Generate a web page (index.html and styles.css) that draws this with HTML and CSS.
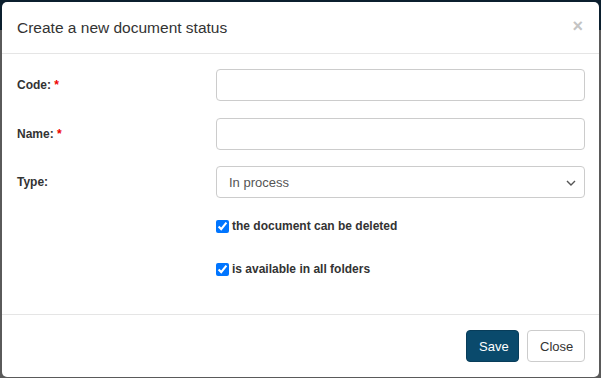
FILE: index.html
```html
<!DOCTYPE html>
<html>
<head>
<meta charset="utf-8">
<link rel="stylesheet" href="styles.css">
</head>
<body>
<div class="modal">
  <div class="modal-header">
    <h4 class="modal-title">Create a new document status</h4>
    <span class="close-x">&times;</span>
  </div>
  <div class="modal-body">
    <div class="form-row first">
      <label class="form-label">Code: <span class="req">*</span></label>
      <div class="input"></div>
    </div>
    <div class="form-row">
      <label class="form-label">Name: <span class="req">*</span></label>
      <div class="input"></div>
    </div>
    <div class="form-row">
      <label class="form-label">Type:</label>
      <div class="input select">
        <span>In process</span>
        <svg class="chev" width="10" height="6" viewBox="0 0 10 6"><path d="M1 1l4 4 4-4" fill="none" stroke="#555" stroke-width="1.4"/></svg>
      </div>
    </div>
    <div class="check-row">
      <label class="check"><input type="checkbox" checked> the document can be deleted</label>
    </div>
    <div class="check-row">
      <label class="check"><input type="checkbox" checked> is available in all folders</label>
    </div>
  </div>
  <div class="modal-footer">
    <button class="btn btn-primary">Save</button>
    <button class="btn btn-default">Close</button>
  </div>
</div>
</body>
</html>
```
FILE: styles.css
```css
html, body {
  margin: 0;
  height: 100%;
}
body {
  background: linear-gradient(to bottom, #0b1f2e 0, #0b1f2e 30px, #5a5a5a 30px);
  font-family: "Liberation Sans", Arial, sans-serif;
  overflow: hidden;
}
.modal {
  position: absolute;
  left: 2px;
  top: 2px;
  width: 597px;
  height: 375px;
  background: #fff;
  border-radius: 5px;
  box-sizing: border-box;
  display: flex;
  flex-direction: column;
}
.modal-header {
  padding: 15px 15px;
  border-bottom: 1px solid #e5e5e5;
  display: flex;
  align-items: center;
  justify-content: space-between;
}
.modal-title {
  margin: 0;
  font-size: 15.5px;
  font-weight: normal;
  line-height: 21px;
  color: #333;
}
.close-x {
  font-size: 18px;
  font-weight: bold;
  color: #c4c4c4;
  line-height: 1;
  margin-right: 1px;
  margin-top: -4px;
}
.modal-body {
  flex: 1;
  padding: 15px 14px 0 15px;
}
.form-row {
  display: grid;
  grid-template-columns: 199px 1fr;
  align-items: center;
  margin-bottom: 16px;
}
.form-row.first {
  margin-bottom: 17px;
}
.form-label {
  font-size: 12px;
  font-weight: bold;
  color: #333;
}
.req {
  color: #e00;
}
.input {
  height: 32px;
  box-sizing: border-box;
  border: 1px solid #ccc;
  border-radius: 4px;
  background: #fff;
}
.select {
  display: flex;
  align-items: center;
  justify-content: space-between;
  padding: 0 8px 0 12px;
  font-size: 13px;
  color: #555;
}
.chev {
  margin-top: 1px;
}
.check-row {
  padding-left: 199px;
  height: 43px;
  display: flex;
  align-items: flex-start;
}
.check {
  display: flex;
  align-items: center;
  font-size: 12px;
  font-weight: bold;
  color: #333;
  margin-top: 5px;
}
.check input {
  margin: 0 3px 0 0;
  width: 13px;
  height: 13px;
}
.modal-footer {
  border-top: 1px solid #e5e5e5;
  padding: 15px 14px 15px 15px;
  display: flex;
  justify-content: flex-end;
  gap: 8px;
}
.btn {
  height: 32px;
  font-family: "Liberation Sans", Arial, sans-serif;
  font-size: 13px;
  border-radius: 4px;
  padding: 0 12px;
  cursor: pointer;
}
.btn-primary {
  background: #0a4a6c;
  color: #fff;
  border: 1px solid #083d5a;
  width: 53px;
}
.btn-default {
  background: #fff;
  color: #333;
  border: 1px solid #ccc;
  width: 58px;
}
```
